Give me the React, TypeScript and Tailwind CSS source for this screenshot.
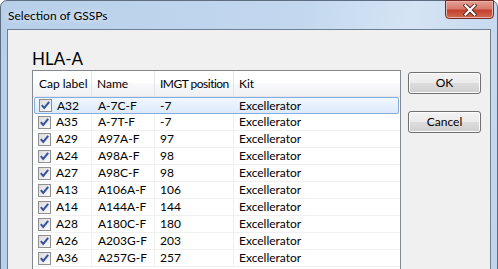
const rows = [
  { cap: 'A32', name: 'A-7C-F', pos: '-7', kit: 'Excellerator', selected: true },
  { cap: 'A35', name: 'A-7T-F', pos: '-7', kit: 'Excellerator' },
  { cap: 'A29', name: 'A97A-F', pos: '97', kit: 'Excellerator' },
  { cap: 'A24', name: 'A98A-F', pos: '98', kit: 'Excellerator' },
  { cap: 'A27', name: 'A98C-F', pos: '98', kit: 'Excellerator' },
  { cap: 'A13', name: 'A106A-F', pos: '106', kit: 'Excellerator' },
  { cap: 'A14', name: 'A144A-F', pos: '144', kit: 'Excellerator' },
  { cap: 'A28', name: 'A180C-F', pos: '180', kit: 'Excellerator' },
  { cap: 'A26', name: 'A203G-F', pos: '203', kit: 'Excellerator' },
  { cap: 'A36', name: 'A257G-F', pos: '257', kit: 'Excellerator' },
];

function CheckBox() {
  return (
    <span className="w-[13px] h-[13px] shrink-0 border border-[#8f8f8f] bg-gradient-to-br from-[#dcdcdc] to-[#fbfbfb] flex items-center justify-center">
      <svg width="11" height="11" viewBox="0 0 11 11">
        <path d="M1.8 5.2 L4.2 8 L9.2 1.8" fill="none" stroke="#3652a3" strokeWidth="2" />
      </svg>
    </span>
  );
}

function Button({ label }: { label: string }) {
  return (
    <button className="w-[73px] h-[22px] rounded-[3px] border border-[#707070] bg-[linear-gradient(#f2f2f2_0%,#ebebeb_50%,#dddddd_50%,#cfcfcf_100%)] text-[12px] text-black leading-none flex items-center justify-center shadow-[inset_0_0_0_1px_#fcfcfc]">
      {label}
    </button>
  );
}

export default function App() {
  return (
    <div className="w-[498px] h-[269px] overflow-hidden bg-white font-['Lato',sans-serif] text-[12px] text-black">
      <div className="w-[498px] h-[320px] rounded-t-[7px] border border-[#5d6d82] bg-[linear-gradient(100deg,#b7cfe9_0%,#c3d8ef_55%,#d5e4f4_75%,#bdd3ec_100%)] flex flex-col">
        {/* title bar */}
        <div className="h-[28px] shrink-0 flex items-start justify-between">
          <span className="pl-[7px] pt-[6px] text-[12px] [text-shadow:0_0_6px_#ffffff]">Selection of GSSPs</span>
          <div className="mr-[3px] -mt-[1px] w-[49px] h-[19px] rounded-b-[4px] border border-[#7a2a22] bg-[linear-gradient(#e4a196_0%,#d77b6d_45%,#c4412f_55%,#cf6a50_100%)] flex items-center justify-center shadow-[inset_0_0_0_1px_#eab3aa]">
            <svg width="14" height="12" viewBox="0 0 14 12">
              <path d="M2.5 1.5 L11.5 10.5 M11.5 1.5 L2.5 10.5" stroke="#5a2520" strokeWidth="4" strokeLinecap="square" />
              <path d="M2.5 1.5 L11.5 10.5 M11.5 1.5 L2.5 10.5" stroke="#ffffff" strokeWidth="2.2" strokeLinecap="square" />
            </svg>
          </div>
        </div>

        {/* client area */}
        <div className="flex-1 mx-[6px] border border-[#6e7f94] bg-[#f0f0f0] pl-[24px]">
          <div className="pt-[17px] h-[40px] text-[17px] leading-[23px]">HLA-A</div>
          <div className="flex gap-[7px]">
            <div className="w-[369px] h-[240px] border border-[#828790] bg-white flex flex-col whitespace-nowrap">
              <div className="h-[26px] shrink-0 flex bg-[linear-gradient(#ffffff_0%,#ffffff_45%,#f7f8fa_55%,#f1f2f4_100%)] border-b border-[#e3e6eb]">
                <div className="w-[59px] border-r border-[#e3e5e8] pl-[6px] flex items-center">Cap label</div>
                <div className="w-[63px] border-r border-[#e3e5e8] pl-[5px] flex items-center">Name</div>
                <div className="w-[79px] border-r border-[#e3e5e8] pl-[5px] flex items-center tracking-[-0.5px]">IMGT position</div>
                <div className="flex-1 pl-[5px] flex items-center">Kit</div>
              </div>
              {rows.map((r) => (
                <div
                  key={r.cap}
                  className={
                    r.selected
                      ? 'h-[17px] shrink-0 mx-[1px] flex rounded-[2px] border border-[#84acdd] bg-[linear-gradient(#f1f7fe,#dceafc)]'
                      : 'h-[17px] shrink-0 flex border-b border-[#f0f0f0]'
                  }
                >
                  <div className={r.selected ? 'w-[57px] flex items-center pl-[4px] gap-[5px]' : 'w-[59px] border-r border-[#f0f0f0] flex items-center pl-[5px] gap-[5px]'}>
                    <CheckBox />
                    <span>{r.cap}</span>
                  </div>
                  <div className={r.selected ? 'w-[63px] flex items-center pl-[6px]' : 'w-[63px] border-r border-[#f0f0f0] flex items-center pl-[6px]'}>{r.name}</div>
                  <div className={r.selected ? 'w-[79px] flex items-center pl-[5px]' : 'w-[79px] border-r border-[#f0f0f0] flex items-center pl-[5px]'}>{r.pos}</div>
                  <div className="flex-1 flex items-center pl-[5px]">{r.kit}</div>
                </div>
              ))}
            </div>
            <div className="mt-[2px] flex flex-col gap-[17px]">
              <Button label="OK" />
              <Button label="Cancel" />
            </div>
          </div>
        </div>
      </div>
    </div>
  );
}
